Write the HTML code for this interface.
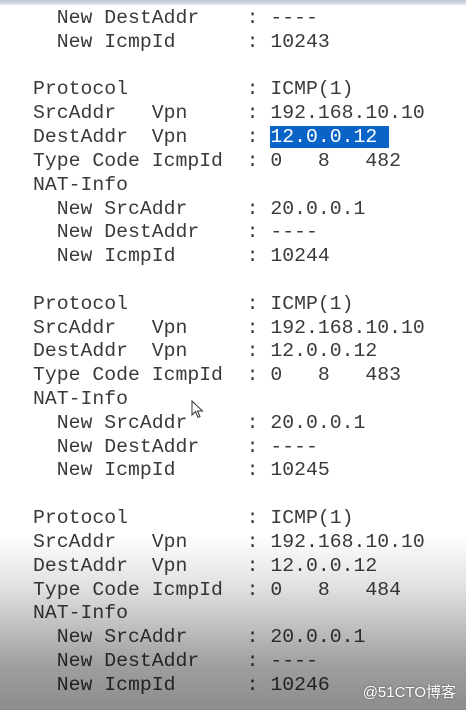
<!DOCTYPE html>
<html><head><meta charset="utf-8"><style>
html,body{margin:0;padding:0;}
body{width:466px;height:710px;overflow:hidden;position:relative;background:#fff;}
.top{position:absolute;left:0;top:0;width:466px;height:5px;background:linear-gradient(#b9c4d2,#e4e8ee);}
.shade{position:absolute;left:0;top:535px;width:466px;height:175px;background:linear-gradient(rgba(0,0,0,0),rgba(0,0,0,0.12) 30%,rgba(0,0,0,0.38) 75%,rgba(0,0,0,0.45));}
pre{position:absolute;left:33px;top:7px;margin:0;font-family:"Liberation Mono",monospace;font-size:19.8px;line-height:23.82px;color:#3a3a3a;}
.hl{background:#0a64c8;color:#fff;}
.wm{position:absolute;right:10px;top:681px;font-family:"Liberation Sans","Noto Sans CJK SC",sans-serif;font-size:15px;color:#fff;text-shadow:0 0 2px #555;}
.cur{position:absolute;left:191px;top:400px;}
</style></head><body>
<div class="top"></div>
<pre>  New DestAddr    : ----
  New IcmpId      : 10243

Protocol          : ICMP(1)
SrcAddr   Vpn     : 192.168.10.10
DestAddr  Vpn     : <span class="hl">12.0.0.12 </span>
Type Code IcmpId  : 0   8   482
NAT-Info
  New SrcAddr     : 20.0.0.1
  New DestAddr    : ----
  New IcmpId      : 10244

Protocol          : ICMP(1)
SrcAddr   Vpn     : 192.168.10.10
DestAddr  Vpn     : 12.0.0.12
Type Code IcmpId  : 0   8   483
NAT-Info
  New SrcAddr     : 20.0.0.1
  New DestAddr    : ----
  New IcmpId      : 10245

Protocol          : ICMP(1)
SrcAddr   Vpn     : 192.168.10.10
DestAddr  Vpn     : 12.0.0.12
Type Code IcmpId  : 0   8   484
NAT-Info
  New SrcAddr     : 20.0.0.1
  New DestAddr    : ----
  New IcmpId      : 10246</pre>
<svg class="cur" width="14" height="20" viewBox="0 0 14 20"><path d="M1 1 L1 15 L4.5 11.5 L7 17.5 L9 16.5 L6.5 11 L11.5 11 Z" fill="#fff" stroke="#333" stroke-width="1"/></svg>
<div class="shade"></div>
<div class="wm">@51CTO博客</div>
</body></html>
